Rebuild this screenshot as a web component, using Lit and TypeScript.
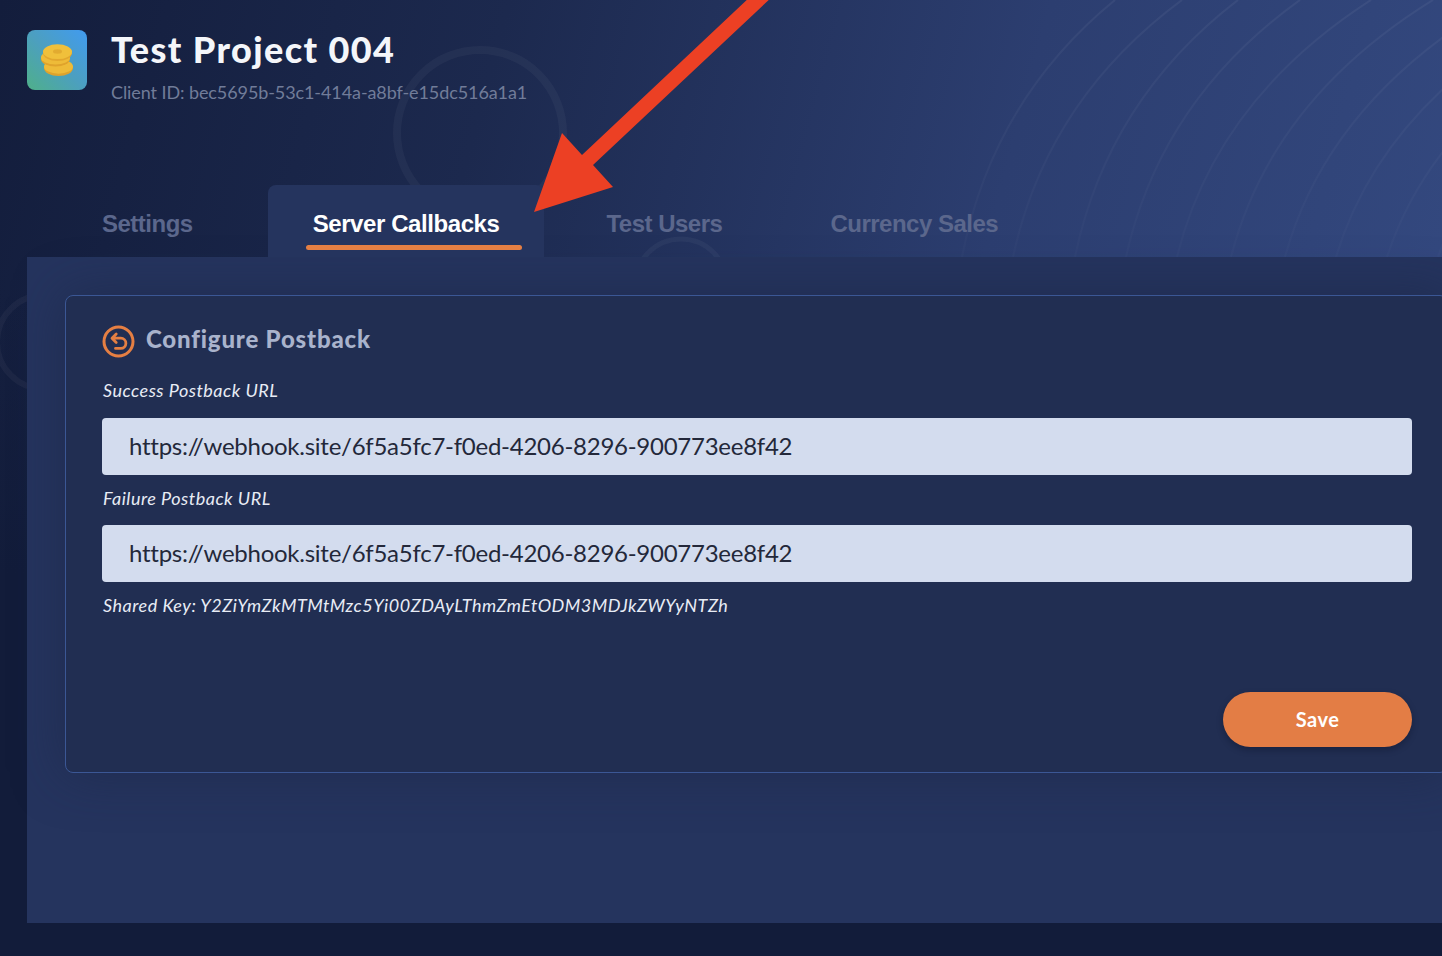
import { LitElement, html, css, svg } from "lit";
import { customElement } from "lit/decorators.js";

const bottoms = [962, 1013, 1075, 1126, 1177, 1231, 1285, 1336, 1387, 1438];
const tops = [1115, 1182, 1238, 1300, 1371, 1433, 1500, 1570, 1640, 1710];
const arcs = bottoms.map((b, i) => {
  const t = tops[i];
  return svg`<path d="M${b} 257Q${b + 0.2 * (t - b)} 100 ${t} 0" fill="none" stroke="url(#fade)" stroke-width="2" />`;
});

@customElement("app-root")
export class AppRoot extends LitElement {
  static styles = css`
    :host { display: block; position: relative; width: 1442px; height: 956px; overflow: hidden;
      font-family: Lato, "Noto Sans", sans-serif;
      background:
        linear-gradient(to bottom, rgba(18, 28, 58, 0) 30%, #121c3a 60%),
        linear-gradient(105deg, #131d3c 0%, #1c294e 30%, #2c3e70 62%, #364c84 100%); }
    .bg { position: absolute; inset: 0; width: 1442px; height: 956px; }
    .arrow { position: absolute; left: 0; top: 0; width: 1442px; height: 956px; pointer-events: none; z-index: 5; }
    .page { position: relative; display: flex; flex-direction: column; }
    .header { display: flex; gap: 24px; padding: 29px 0 0 27px; height: 185px; box-sizing: border-box; }
    .logo { width: 60px; height: 60px; margin-top: 1px; border-radius: 8px; flex: none; display: flex; align-items: center; justify-content: center;
      background: linear-gradient(to top right, #4fb089, #4c9fc0 50%, #419bf0); }
    .title { margin: 0; font-size: 36px; line-height: 40px; font-weight: 900; color: #f4f6fa; letter-spacing: 1.4px; }
    .client { margin-top: 12px; font-size: 18px; line-height: 22px; color: #717c99; letter-spacing: -0.09px; }
    .tabs { display: flex; height: 72px; padding-left: 48px; font-family: "Liberation Sans", Arial, sans-serif; }
    .tab { position: relative; display: flex; align-items: center; padding: 6px 54px 0; box-sizing: border-box; font-size: 24px;
      letter-spacing: -0.5px; font-weight: 700; color: #5b678c; height: 72px; }
    .tab.active { background: #25345e; color: #fff; border-radius: 8px 8px 0 0; padding-left: 45px; padding-right: 45px; margin: 0 8px 0 21px; letter-spacing: -0.42px; }
    .tab.active::after { content: ""; position: absolute; left: 38px; right: 22px; top: 60px; height: 5px; border-radius: 3px; background: #e57f43; }
    .panel { margin-left: 27px; width: 1459px; height: 666px; flex: none; box-sizing: border-box; padding: 38px 38px 0;
      background: #25345e; }
    .card { box-sizing: border-box; height: 478px; padding: 24px 35px 0 36px; border: 1px solid #3b5795; border-radius: 8px;
      background: #212e52; box-shadow: 0 0 50px rgba(28, 38, 70, 0.6); display: flex; flex-direction: column; }
    .heading { display: flex; align-items: flex-start; gap: 11px; height: 44px; }
    .heading svg { margin-top: 5px; flex: none; }
    .heading h2 { margin: 0; font-size: 24px; line-height: 38px; font-weight: 900; color: #a9b3cc; letter-spacing: 0.82px; }
    label, .key { display: block; padding-left: 1px; font-style: italic; font-size: 18px; line-height: 22px; color: #e8ecf5; letter-spacing: 0.5px; }
    .l1 { margin-top: 15px; }
    .l2 { margin-top: 12px; }
    input { display: block; box-sizing: border-box; width: 100%; height: 57px; border: 0; outline: 0; border-radius: 4px; padding: 0 27px 3px;
      background: #d3dcee; color: #23283a; font: 400 24px Lato, sans-serif; letter-spacing: -0.26px; }
    .i1 { margin-top: 17px; }
    .i2 { margin-top: 16px; }
    .key { margin-top: 12px; }
    .actions { display: flex; justify-content: flex-end; margin-top: 76px; }
    button { width: 189px; height: 55px; padding: 0 0 2px; border: 0; border-radius: 28px; background: #e37d45; color: #fff; font: 700 20px Lato, sans-serif;
      letter-spacing: 0.5px; box-shadow: 0 3px 6px rgba(10, 15, 35, 0.35); }
  `;

  render() {
    return html`
      <svg class="bg" viewBox="0 0 1442 956" aria-hidden="true">
        <defs>
          <linearGradient id="fade" gradientUnits="userSpaceOnUse" x1="0" y1="0" x2="0" y2="257">
            <stop offset="0" stop-color="#fff" stop-opacity="0.05" />
            <stop offset="1" stop-color="#fff" stop-opacity="0.015" />
          </linearGradient>
        </defs>
        ${arcs}
        <circle cx="480" cy="133" r="83" fill="none" stroke="#ffffff" stroke-opacity="0.04" stroke-width="8" />
        <circle cx="681" cy="285" r="46" fill="none" stroke="#ffffff" stroke-opacity="0.04" stroke-width="5" />
        <circle cx="44" cy="342" r="47" fill="none" stroke="#ffffff" stroke-opacity="0.04" stroke-width="6" />
      </svg>
      <div class="page">
        <header class="header">
          <div class="logo">
            <svg width="34" height="34" viewBox="0 0 34 34" aria-hidden="true">
              <ellipse cx="18.5" cy="25" rx="14.5" ry="8" fill="#dfa32c" />
              <ellipse cx="18.5" cy="23.5" rx="14.5" ry="7.2" fill="#eebb38" />
              <ellipse cx="15.5" cy="16" rx="14.5" ry="7.5" fill="#dfa32c" />
              <ellipse cx="15.5" cy="14.5" rx="14.5" ry="7" fill="#eebb38" />
              <ellipse cx="17.5" cy="10" rx="14.5" ry="8" fill="#e2a72e" />
              <ellipse cx="17.5" cy="8.7" rx="14.5" ry="7.4" fill="#f0c03b" />
              <ellipse cx="17.5" cy="8.5" rx="4.5" ry="2.2" fill="#e2ab30" />
            </svg>
          </div>
          <div>
            <h1 class="title">Test Project 004</h1>
            <div class="client">Client ID: bec5695b-53c1-414a-a8bf-e15dc516a1a1</div>
          </div>
        </header>
        <nav class="tabs">
          <div class="tab">Settings</div>
          <div class="tab active">Server Callbacks</div>
          <div class="tab">Test Users</div>
          <div class="tab">Currency Sales</div>
        </nav>
        <main class="panel">
          <section class="card">
            <div class="heading">
              <svg width="33" height="33" viewBox="0 0 33 33" fill="none" stroke="#e57f43" aria-hidden="true">
                <circle cx="16.5" cy="16.5" r="14.5" stroke-width="3" />
                <path d="M10.5 13.2h8.3a5.1 5.1 0 0 1 0 10.2h-5.3M14.2 9l-4.2 4.2 4.2 4.2" stroke-width="2.8" stroke-linecap="round" stroke-linejoin="round" />
              </svg>
              <h2>Configure Postback</h2>
            </div>
            <label class="l1">Success Postback URL</label>
            <input class="i1" readonly value="https://webhook.site/6f5a5fc7-f0ed-4206-8296-900773ee8f42" />
            <label class="l2">Failure Postback URL</label>
            <input class="i2" readonly value="https://webhook.site/6f5a5fc7-f0ed-4206-8296-900773ee8f42" />
            <div class="key">Shared Key: Y2ZiYmZkMTMtMzc5Yi00ZDAyLThmZmEtODM3MDJkZWYyNTZh</div>
            <div class="actions"><button>Save</button></div>
          </section>
        </main>
      </div>
      <svg class="arrow" viewBox="0 0 1442 956" aria-hidden="true">
        <polygon points="534,212 562,133 582,155 751,-4 773,-4 593,165 613,187" fill="#ec4024" />
      </svg>
    `;
  }
}
